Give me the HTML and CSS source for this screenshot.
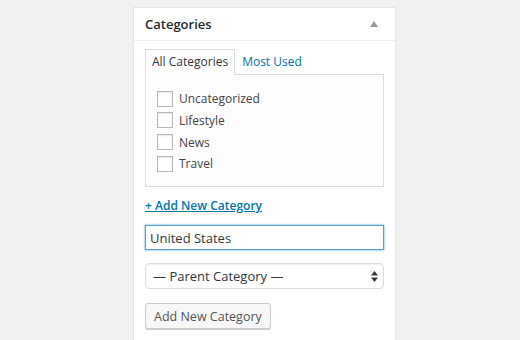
FILE: index.html
```html
<!DOCTYPE html>
<html lang="en">
<head>
  <meta charset="UTF-8" />
  <title>Categories</title>
  <link rel="stylesheet" href="styles.css">
</head>
<body>
  <div class="postbox">
    <div class="postbox-header">
      <h2>Categories</h2>
      <span class="toggle-arrow"></span>
    </div>

    <div class="inside">
      <!-- Tabs -->
      <ul class="category-tabs">
        <li class="tab active">All Categories</li>
        <li class="tab"><a href="#">Most Used</a></li>
      </ul>

      <div class="tabs-panel">
        <ul class="category-list">
          <li><label><input type="checkbox" /> Uncategorized</label></li>
          <li><label><input type="checkbox" /> Lifestyle</label></li>
          <li><label><input type="checkbox" /> News</label></li>
          <li><label><input type="checkbox" /> Travel</label></li>
        </ul>
      </div>

      <!-- Add new category -->
      <div class="category-adder">
        <a href="#" class="add-toggle">+ Add New Category</a>
        <input type="text" class="new-category" value="United States" />
        <div class="select-wrap">
          <select class="parent-category">
            <option>— Parent Category —</option>
          </select>
          <svg class="select-arrows" width="7" height="11" viewBox="0 0 7 11">
            <path d="M3.5 0 L7 4.5 H0 Z M0 6.5 H7 L3.5 11 Z" fill="#32373c" />
          </svg>
        </div>
        <button type="button" class="button">Add New Category</button>
      </div>
    </div>
  </div>
</body>
</html>
```

FILE: styles.css
```css
/* Global styles */
* {
  box-sizing: border-box;
  margin: 0;
  padding: 0;
}
body {
  font-family: 'Open Sans', sans-serif;
  font-size: 12px;
  color: #444;
  background-color: #f1f1f1;
  padding: 7px 0 0 133px;
}
.postbox {
  width: 263px;
  height: 400px;
  background-color: #fff;
  border: 1px solid #e5e5e5;
  box-shadow: 0 1px 1px rgba(0, 0, 0, 0.04);
}
.postbox-header {
  display: flex;
  align-items: center;
  justify-content: space-between;
  height: 33px;
  padding: 0 11px;
  border-bottom: 1px solid #eee;
}
.postbox-header h2 {
  font-size: 13px;
  font-weight: 600;
  color: #23282d;
}
.toggle-arrow {
  width: 0;
  height: 0;
  margin-right: 6px;
  border-left: 4px solid transparent;
  border-right: 4px solid transparent;
  border-bottom: 6px solid #999;
}
.inside {
  padding: 8px 11px 12px;
}
/* Tabs */
.category-tabs {
  display: flex;
  list-style: none;
  margin-bottom: -1px;
}
.tab {
  height: 26px;
  padding: 0 6px;
  line-height: 24px;
  border: 1px solid transparent;
}
.tab.active {
  background-color: #fdfdfd;
  border-color: #ddd;
  border-bottom-color: #fdfdfd;
  color: #32373c;
}
.tab a {
  color: #0073aa;
  text-decoration: none;
}
.tabs-panel {
  height: 113px;
  background-color: #fdfdfd;
  border: 1px solid #ddd;
  padding: 13px 11px 11px;
}
.category-list {
  list-style: none;
}
.category-list li {
  height: 21.67px;
  color: #444;
}
.category-list label {
  display: flex;
  align-items: center;
  height: 100%;
  gap: 6px;
}
.category-list input[type="checkbox"] {
  -webkit-appearance: none;
  appearance: none;
  width: 16px;
  height: 16px;
  border: 1px solid #b4b9be;
  background-color: #fff;
  box-shadow: inset 0 1px 2px rgba(0, 0, 0, 0.1);
}
/* Adder */
.category-adder {
  display: flex;
  flex-direction: column;
  align-items: flex-start;
  padding-top: 10px;
}
.add-toggle {
  font-weight: 600;
  color: #0073aa;
  text-decoration: underline;
  line-height: 17px;
  margin-bottom: 11px;
}
.new-category {
  width: 100%;
  height: 25px;
  padding: 2px 4px;
  font-family: inherit;
  font-size: 13px;
  color: #32373c;
  border: 1px solid #5b9dd9;
  box-shadow: 0 0 2px rgba(30, 140, 190, 0.8);
  outline: none;
  margin-bottom: 13px;
}
.select-wrap {
  position: relative;
  width: 100%;
  margin-bottom: 14px;
}
.parent-category {
  -webkit-appearance: none;
  appearance: none;
  display: block;
  width: 100%;
  height: 26px;
  padding: 2px 7px;
  font-family: inherit;
  font-size: 13px;
  color: #32373c;
  background-color: #fff;
  border: 1px solid #ddd;
  border-radius: 4px;
  box-shadow: inset 0 1px 2px rgba(0, 0, 0, 0.07);
}
.select-arrows {
  position: absolute;
  right: 6px;
  top: 8px;
  pointer-events: none;
}
.button {
  height: 26px;
  padding: 0 8px;
  font-family: inherit;
  font-size: 12.5px;
  color: #555;
  background-color: #f7f7f7;
  border: 1px solid #ccc;
  border-radius: 3px;
  box-shadow: 0 1px 0 #ccc;
  cursor: pointer;
}
```
